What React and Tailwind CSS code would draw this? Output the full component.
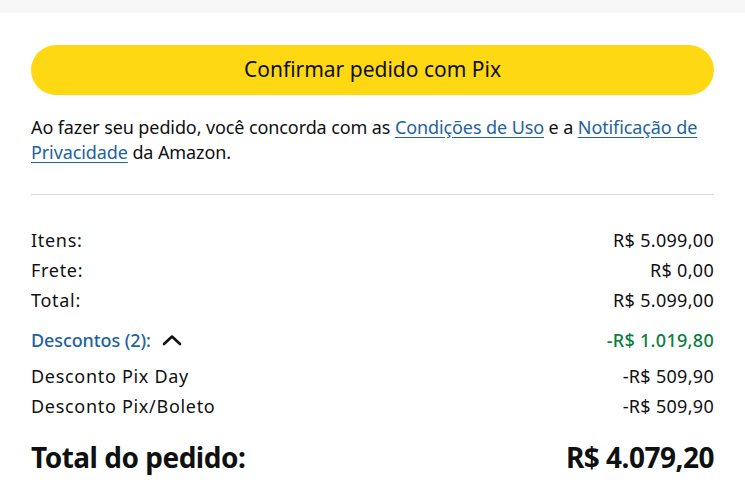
import React from 'react';

const font = { fontFamily: '"Noto Sans", "Liberation Sans", sans-serif' };

const Row = ({ label, value, className = '' }) => (
  <div className={`flex items-center justify-between h-[30px] ${className}`}>
    <span className="tracking-[0.7px]">{label}</span>
    <span>{value}</span>
  </div>
);

export default function App() {
  return (
    <div className="w-[745px] h-[500px] bg-white text-[#0f1111] overflow-hidden" style={font}>
      <div className="h-[13px] bg-[#f7f7f7]" />
      <div className="px-[31px] pt-[32px]">
        {/* Pix button */}
        <button className="w-full h-[50px] rounded-full bg-[#ffd814] text-[21px] text-[#0f1111]">
          Confirmar pedido com Pix
        </button>

        <p className="mt-[20px] text-[18px] leading-[25px] tracking-[-0.1px]">
          Ao fazer seu pedido, você concorda com as{' '}
          <a className="text-[#2162a1] underline underline-offset-[3px]">Condições de Uso</a> e a{' '}
          <a className="text-[#2162a1] underline underline-offset-[3px]">Notificação de Privacidade</a> da Amazon.
        </p>

        <div className="mt-[29px] h-px bg-[#d5d9d9]" />

        {/* Order summary */}
        <div className="mt-[30px] text-[18px] tracking-[0.3px]">
          <Row label="Itens:" value="R$ 5.099,00" />
          <Row label="Frete:" value="R$ 0,00" />
          <Row label="Total:" value="R$ 5.099,00" />
          <div className="flex items-center justify-between h-[30px] mt-[10px]">
            <span className="flex items-center gap-[10px] text-[#2162a1] font-medium tracking-[-0.1px]">
              Descontos (2):
              <svg width="22" height="14" viewBox="0 0 22 14" fill="none">
                <path d="M3 11 L11 3.5 L19 11" stroke="#0f1111" strokeWidth="2.6" strokeLinecap="round" strokeLinejoin="round" />
              </svg>
            </span>
            <span className="text-[#0a7d3c] font-medium">-R$ 1.019,80</span>
          </div>
          <Row label="Desconto Pix Day" value="-R$ 509,90" className="mt-[6px]" />
          <Row label="Desconto Pix/Boleto" value="-R$ 509,90" />
          <div className="flex items-center justify-between mt-[15px] text-[28px] font-bold tracking-[-0.5px]">
            <span>Total do pedido:</span>
            <span>R$ 4.079,20</span>
          </div>
        </div>
      </div>
    </div>
  );
}
